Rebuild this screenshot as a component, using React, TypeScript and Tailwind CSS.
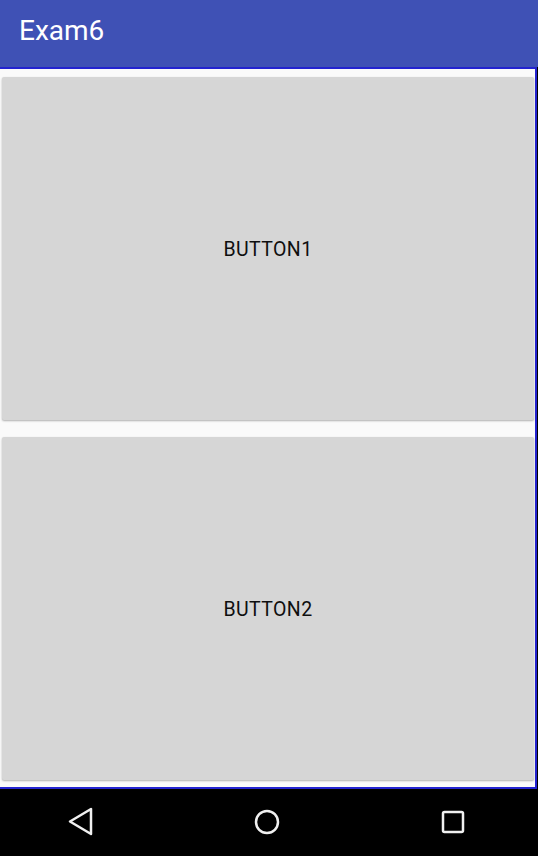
import React from "react";

export default function App() {
  return (
    <div className="w-[538px] h-[856px] flex flex-col bg-black overflow-hidden" style={{ fontFamily: "Roboto, 'Noto Sans', sans-serif" }}>
      <div className="h-[67px] shrink-0 bg-[#3f51b5] flex items-center pl-[19px]">
        <span className="text-white text-[28px] leading-none mb-[6px]">Exam6</span>
      </div>
      <div className="h-[722px] shrink-0 w-[538px] flex">
        <div className="flex-1 border-t-2 border-b-2 border-r-2 border-[#2323d0] bg-[#fafafa] flex flex-col pt-[8px] pb-[7px] pl-[2px] pr-[1px] gap-[17px]">
          <button className="flex-1 rounded-[2px] bg-[#d6d6d6] shadow-[0_1px_2px_rgba(0,0,0,0.3)] flex items-center justify-center pt-[3px] text-[19.5px] font-normal text-[#0f0f0f] tracking-[0.4px]">
            BUTTON1
          </button>
          <button className="flex-1 rounded-[2px] bg-[#d6d6d6] shadow-[0_1px_2px_rgba(0,0,0,0.3)] flex items-center justify-center pt-[3px] text-[19.5px] font-normal text-[#0f0f0f] tracking-[0.4px]">
            BUTTON2
          </button>
        </div>
        <div className="w-px bg-black" />
      </div>
      <div className="flex-1 bg-black relative">
        <svg className="absolute left-0 top-0" width="538" height="67" viewBox="0 0 538 67">
          <polygon points="91,20 91,45 70,32.5" fill="none" stroke="#f0f0f0" strokeWidth="2.5" strokeLinejoin="round" />
          <circle cx="267" cy="33" r="11" fill="none" stroke="#f0f0f0" strokeWidth="2.5" />
          <rect x="443" y="23" width="20" height="20" rx="1.5" fill="none" stroke="#f0f0f0" strokeWidth="2.5" />
        </svg>
      </div>
    </div>
  );
}
